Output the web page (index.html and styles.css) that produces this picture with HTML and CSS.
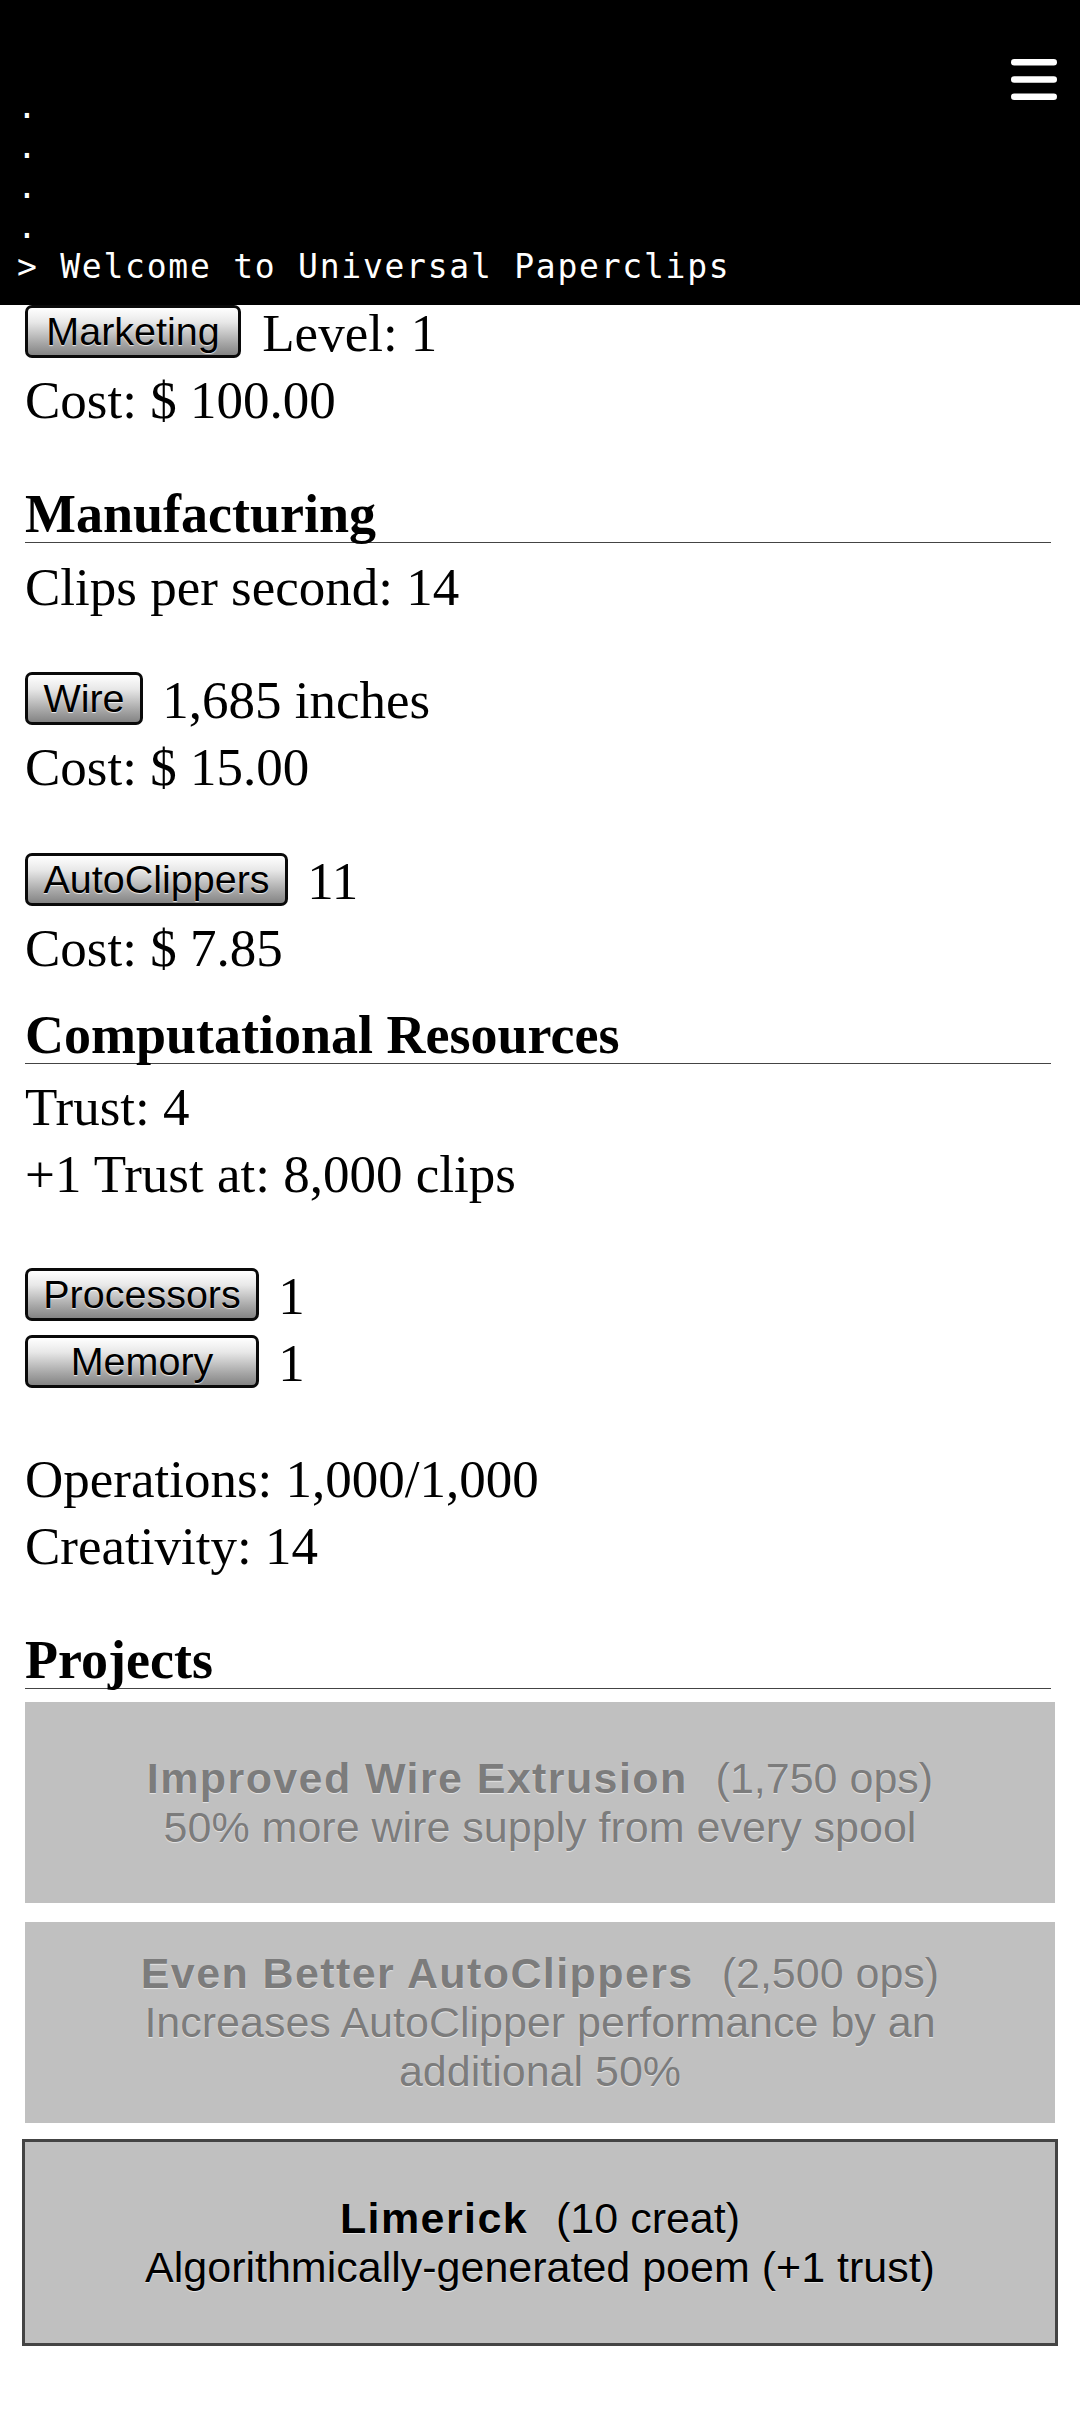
FILE: index.html
```html
<!DOCTYPE html>
<html lang="en">
<head>
<meta charset="utf-8">
<title>Universal Paperclips</title>
<link rel="stylesheet" href="styles.css">
</head>
<body>
<header class="console">
  <div class="console-lines">
    <div class="console-line">.</div>
    <div class="console-line">.</div>
    <div class="console-line">.</div>
    <div class="console-line">.</div>
    <div class="console-line">&gt; Welcome to Universal Paperclips</div>
  </div>
  <button class="menu" aria-label="Menu"><svg width="46" height="41" viewBox="0 0 46 41" aria-hidden="true"><g fill="#fff"><rect x="0" y="0" width="46" height="6.5" rx="3.25"/><rect x="0" y="17.2" width="46" height="6.5" rx="3.25"/><rect x="0" y="34.5" width="46" height="6.5" rx="3.25"/></g></svg></button>
</header>

<main class="game">
  <section class="block">
    <div class="line"><button class="btn btn-marketing">Marketing</button> Level: 1</div>
    <div class="line">Cost: $ 100.00</div>
  </section>

  <section class="block sec-manufacturing">
    <h2 class="heading">Manufacturing</h2>
    <div class="line after-heading">Clips per second: 14</div>
    <div class="group g-wire">
      <div class="line"><button class="btn btn-wire">Wire</button> 1,685 inches</div>
      <div class="line">Cost: $ 15.00</div>
    </div>
    <div class="group g-auto">
      <div class="line"><button class="btn btn-auto">AutoClippers</button> 11</div>
      <div class="line">Cost: $ 7.85</div>
    </div>
  </section>

  <section class="block sec-compute">
    <h2 class="heading">Computational Resources</h2>
    <div class="line after-heading">Trust: 4</div>
    <div class="line">+1 Trust at: 8,000 clips</div>
    <div class="group g-cpu">
      <div class="line"><button class="btn btn-cpu">Processors</button> 1</div>
      <div class="line"><button class="btn btn-cpu">Memory</button> 1</div>
    </div>
    <div class="group g-ops">
      <div class="line">Operations: 1,000/1,000</div>
      <div class="line">Creativity: 14</div>
    </div>
  </section>

  <section class="block sec-projects">
    <h2 class="heading">Projects</h2>
    <div class="projects">
      <div class="card">
        <div><span class="p-title">Improved Wire Extrusion</span><span class="p-cost">(1,750 ops)</span></div>
        <div>50% more wire supply from every spool</div>
      </div>
      <div class="card">
        <div><span class="p-title">Even Better AutoClippers</span><span class="p-cost">(2,500 ops)</span></div>
        <div>Increases AutoClipper performance by an additional 50%</div>
      </div>
      <div class="card card-active">
        <div><span class="p-title">Limerick</span><span class="p-cost">(10 creat)</span></div>
        <div>Algorithmically-generated poem (+1 trust)</div>
      </div>
    </div>
  </section>
</main>
</body>
</html>
```

FILE: styles.css
```css
* {
  box-sizing: border-box;
}

html,
body {
  margin: 0;
  padding: 0;
  background: #ffffff;
}

body {
  font-family: "Liberation Serif", "Times New Roman", serif;
  font-size: 53px;
  line-height: 67px;
  color: #000000;
}

/* ---------- console header (fixed over the scrolled page) ---------- */
.console {
  position: fixed;
  top: 0;
  left: 0;
  right: 0;
  height: 305px;
  background: #000000;
  color: #ffffff;
  z-index: 10;
  padding: 87px 0 0 17px;
  overflow: hidden;
  font-family: "DejaVu Sans Mono", "Liberation Mono", monospace;
  font-size: 33px;
  line-height: 40px;
  letter-spacing: 1.75px;
}

.console-line {
  height: 40px;
  white-space: pre;
}

.menu {
  position: absolute;
  top: 59px;
  right: 23px;
  width: 46px;
  height: 41px;
  padding: 0;
  margin: 0;
  border: 0;
  background: none;
  line-height: 0;
}

.menu svg {
  display: block;
}

/* ---------- page content ---------- */
.game {
  padding: 300px 25px 60px 25px;
}

.line {
  height: 67px;
  white-space: nowrap;
}

.heading {
  margin: 52px 4px 0 0;
  padding: 0;
  font-size: 54px;
  font-weight: bold;
  line-height: 56px;
  border-bottom: 1px solid #444444;
}

.sec-compute .heading {
  margin-top: 25px;
}

.after-heading {
  margin-top: 11px;
}

.sec-compute .after-heading {
  margin-top: 10px;
}

.g-wire {
  margin-top: 46px;
}

.g-auto {
  margin-top: 47px;
}

.g-cpu {
  margin-top: 55px;
}

.g-ops {
  margin-top: 49px;
}

/* ---------- buttons ---------- */
.btn {
  display: inline-block;
  height: 53px;
  margin: 0 6px 0 0;
  padding: 0;
  border: 3px solid #0a0a0a;
  border-radius: 7px;
  background: linear-gradient(#ffffff 0%, #e8e8e8 30%, #a6a6a6 75%, #848484 100%);
  font-family: "Liberation Sans", Arial, sans-serif;
  font-size: 39.5px;
  line-height: 47px;
  color: #000000;
  text-align: center;
  text-shadow: 0 1px 1px rgba(255, 255, 255, 0.8);
  vertical-align: 6px;
}

.btn-marketing {
  width: 216px;
  margin-right: 8px;
}

.btn-wire {
  width: 118px;
}

.btn-auto {
  width: 263px;
}

.btn-cpu {
  width: 234px;
}

/* ---------- projects ---------- */
.projects {
  margin: 10px -3px 0 -3px;
  display: flex;
  flex-direction: column;
  gap: 13px;
}

.card {
  height: 207px;
  border: 3px solid transparent;
  background: #c0c0c0;
  background-clip: padding-box;
  display: flex;
  flex-direction: column;
  justify-content: center;
  align-items: center;
  padding: 0 60px;
  text-align: center;
  font-family: "Liberation Sans", Arial, sans-serif;
  font-size: 43px;
  line-height: 49px;
  color: #7c7c7c;
  text-shadow: 0 1px 1px rgba(255, 255, 255, 0.6);
}

.card-active {
  border-color: #444444;
  color: #000000;
}

.p-title {
  font-weight: bold;
  letter-spacing: 1.4px;
}

.p-cost {
  margin-left: 28px;
}
```
